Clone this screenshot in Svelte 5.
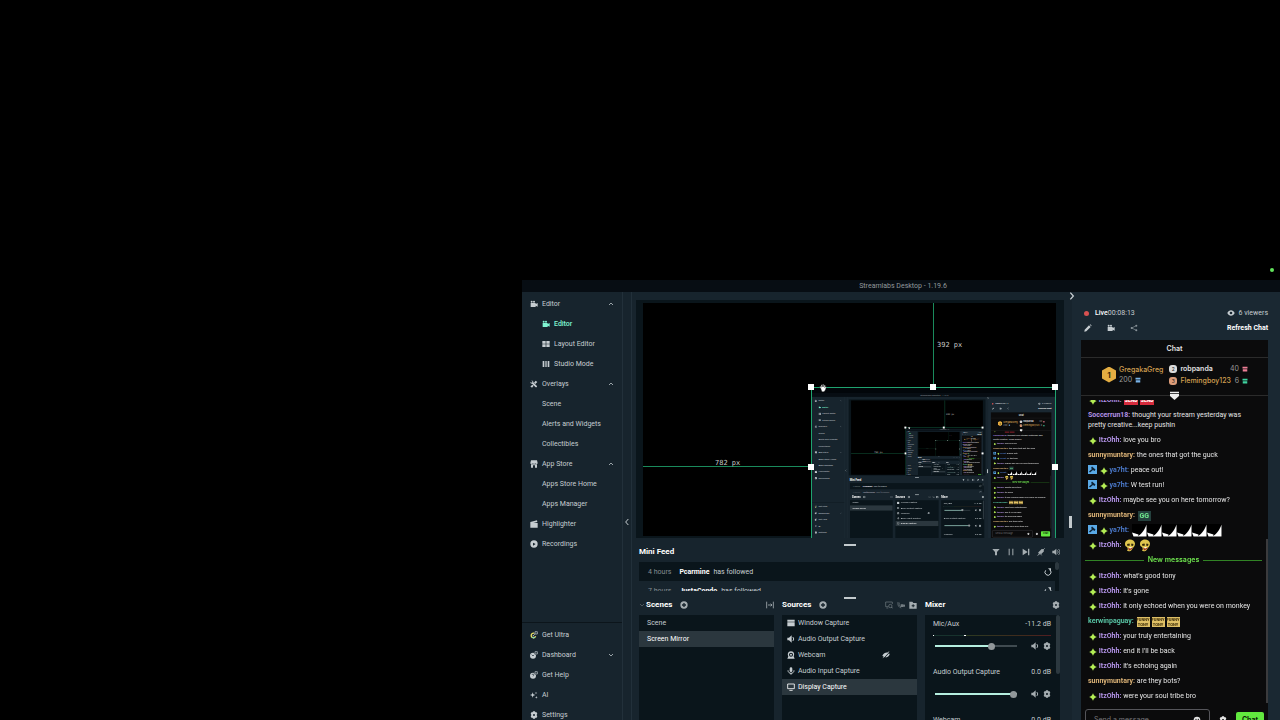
<script>
	const MAX_DEPTH = 2;

	const menu = [
		{ label: 'Editor', icon: 'camera', open: true },
		{ label: 'Editor', icon: 'camera', sub: true, active: true },
		{ label: 'Layout Editor', icon: 'grid', sub: true },
		{ label: 'Studio Mode', icon: 'columns', sub: true },
		{ label: 'Overlays', icon: 'tools', open: true },
		{ label: 'Scene', sub: true },
		{ label: 'Alerts and Widgets', sub: true },
		{ label: 'Collectibles', sub: true },
		{ label: 'App Store', icon: 'store', open: true },
		{ label: 'Apps Store Home', sub: true },
		{ label: 'Apps Manager', sub: true },
		{ label: 'Highlighter', icon: 'clapper' },
		{ label: 'Recordings', icon: 'record' }
	];

	const footerMenu = [
		{ label: 'Get Ultra', icon: 'ultra' },
		{ label: 'Dashboard', icon: 'dashboard', closed: true },
		{ label: 'Get Help', icon: 'help' },
		{ label: 'AI', icon: 'sparkle' },
		{ label: 'Settings', icon: 'gear' }
	];

	const feed = [
		{ age: '4 hours', who: 'Pcarmine', what: 'has followed' },
		{ age: '7 hours', who: 'JustaCondo', what: 'has followed' }
	];

	const sources = [
		{ label: 'Window Capture', icon: 'window' },
		{ label: 'Audio Output Capture', icon: 'speaker' },
		{ label: 'Webcam', icon: 'webcam', hidden: true },
		{ label: 'Audio Input Capture', icon: 'mic' },
		{ label: 'Display Capture', icon: 'display', selected: true }
	];

	let channels = $state([
		{ label: 'Mic/Aux', db: '-11.2 dB', value: 71, metering: true },
		{ label: 'Audio Output Capture', db: '0.0 dB', value: 100 },
		{ label: 'Webcam', db: '0.0 dB', value: 100 }
	]);

	const messages = [
		{ user: 'ItzOhh', star: true, emote: 'send', count: 2 },
		{ user: 'Soccerrun18', text: 'thought your stream yesterday was pretty creative...keep pushin' },
		{ user: 'ItzOhh', star: true, text: 'love you bro' },
		{ user: 'sunnymuntary', text: 'the ones that got the guck' },
		{ user: 'ya7ht', star: true, mod: true, text: 'peace out!' },
		{ user: 'ya7ht', star: true, mod: true, text: 'W test run!' },
		{ user: 'ItzOhh', star: true, text: 'maybe see you on here tomorrow?' },
		{ user: 'sunnymuntary', emote: 'gg', count: 1 },
		{ user: 'ya7ht', star: true, mod: true, emote: 'sail', count: 6 },
		{ user: 'ItzOhh', star: true, emote: 'face', count: 2 },
		{ divider: 'New messages' },
		{ user: 'ItzOhh', star: true, text: "what's good tony" },
		{ user: 'ItzOhh', star: true, text: "it's gone" },
		{ user: 'ItzOhh', star: true, text: 'it only echoed when you were on monkey' },
		{ user: 'kerwinpaguay', emote: 'tony', count: 3 },
		{ user: 'ItzOhh', star: true, text: 'your truly entertaining' },
		{ user: 'ItzOhh', star: true, text: "end it I'll be back" },
		{ user: 'ItzOhh', star: true, text: "it's echoing again" },
		{ user: 'sunnymuntary', text: 'are they bots?' },
		{ user: 'ItzOhh', star: true, text: 'were your soul tribe bro' }
	];
</script>

{#snippet icon(name)}
	<svg class="icon" viewBox="0 0 24 24" fill="currentColor" aria-hidden="true">
		{#if name === 'camera'}
			<path d="M2 9h15v3l6-3v11l-6-3v4H2z" /><circle cx="5" cy="5" r="3" /><circle cx="12" cy="5" r="3" />
		{:else if name === 'grid'}
			<path d="M1 3h10v8H1zM13 3h10v8H13zM1 13h10v8H1zM13 13h10v8H13z" />
		{:else if name === 'columns'}
			<path d="M2 3h5v18H2zM10 3h4v18h-4zM17 3h5v18h-5z" />
		{:else if name === 'tools'}
			<path d="M4 1l5 2 2 5 9 9c3 3-1 6-4 4l-9-9-5-2-1-5 4 3 3-2z" /><path d="M17 2l5 4-6 6-4-4zM8 14l3 3-5 6-5-4z" />
		{:else if name === 'store'}
			<path d="M3 1h18l2 8c0 4-5 4-6 1-1 3-5 3-5 0-1 3-5 3-5 0-1 3-6 3-6-1zM3 13h18v10h-6v-7H9v7H3z" />
		{:else if name === 'clapper'}
			<path d="M1 6l20-5 1 5-12 3h13v14H1z" />
		{:else if name === 'record'}
			<path fill-rule="evenodd" d="M12 1a11 11 0 1 0 0 22a11 11 0 1 0 0-22zm-3 7l8 4-8 5z" />
		{:else if name === 'ultra' || name === 'dashboard' || name === 'help'}
			{#if name === 'ultra'}
				<path d="M15 8a7 7 0 1 0 2 8" fill="none" stroke="#e8e067" stroke-width="4" />
				<path d="M6 19a7 7 0 0 0 9 0" fill="none" stroke="#7fe0c0" stroke-width="3" />
				<circle cx="10" cy="14" r="2" />
			{:else}
				<circle cx="9" cy="14" r="9" />
				<path d={name === 'help' ? 'M6 12c0-4 6-4 6 0 0 2-3 2-3 4' : 'M5 11l4 4 3-3'} fill="none" stroke="#17242d" stroke-width="2" />
			{/if}
			<path d="M13 1h10v10H13z" fill="#17242d" /><path d="M15 2h7v7h-7zM15 9l-3 3" fill="none" stroke="currentColor" stroke-width="2" />
		{:else if name === 'sparkle'}
			<path d="M8 4l2 6 6 2-6 2-2 6-2-6-6-2 6-2zM18 2l1 3 3 1-3 1-1 3-1-3-3-1 3-1zM19 15l1 3 3 1-3 1-1 3-1-3-3-1 3-1z" />
		{:else if name === 'gear'}
			<path fill-rule="evenodd" d="M9 1h6l1 3 3-1 3 5-2 3v2l2 3-3 5-3-1-1 3H9l-1-3-3 1-3-5 2-3v-2L2 8l3-5 3 1zm3 8a3 3 0 1 0 0 6a3 3 0 1 0 0-6z" />
		{:else if name === 'plus'}
			<path fill-rule="evenodd" d="M12 1a11 11 0 1 0 0 22a11 11 0 1 0 0-22zm-2 5h4v4h4v4h-4v4h-4v-4H6v-4h4z" />
		{:else if name === 'collapse'}
			<path d="M2 2v20M22 2v20M6 12h12M14 8l4 4-4 4" fill="none" stroke="currentColor" stroke-width="2.5" />
		{:else if name === 'filter'}
			<path d="M1 3h22l-8 9v10h-6V12z" />
		{:else if name === 'pause'}
			<path d="M5 2h3v20H5zM16 2h3v20h-3z" />
		{:else if name === 'skip'}
			<path d="M2 2l15 10L2 22zM18 2h4v20h-4z" />
		{:else if name === 'mute'}
			<path d="M3 14L14 3l5 1 2 6-8 8z" /><path d="M2 23L23 1M4 18l6-1 4 5" fill="none" stroke="currentColor" stroke-width="2.5" />
		{:else if name === 'speaker'}
			<path d="M1 8h5l8-7v22l-8-7H1z" /><path d="M17 6c4 3 4 9 0 12" fill="none" stroke="currentColor" stroke-width="3" />
		{:else if name === 'volume'}
			<path d="M1 8h5l7-6v20l-7-6H1z" /><path d="M16 7c3 3 3 7 0 10M19 3c6 5 6 13 0 18" fill="none" stroke="currentColor" stroke-width="2.5" />
		{:else if name === 'undo'}
			<path d="M5 7a9 9 0 1 0 13-1" fill="none" stroke="currentColor" stroke-width="3" /><path d="M12 1h9v9z" />
		{:else if name === 'window'}
			<path d="M1 2h22v6H1zM1 10h22v12H1z" />
		{:else if name === 'webcam'}
			<path fill-rule="evenodd" d="M12 1C2 1 1 11 4 16l-3 7h22l-3-7C23 11 22 1 12 1zm0 4a6 6 0 1 1 0 12a6 6 0 1 1 0-12z" /><circle cx="12" cy="11" r="3" />
		{:else if name === 'mic'}
			<rect x="8" y="1" width="8" height="14" rx="4" /><path d="M3 10c0 12 18 12 18 0M12 18v5" fill="none" stroke="currentColor" stroke-width="3" />
		{:else if name === 'display'}
			<path d="M2 3h20v14H2zM7 22h10" fill="none" stroke="currentColor" stroke-width="2.5" />
		{:else if name === 'hidden'}
			<path d="M1 14c4-9 12-11 18-9L7 19z" /><path d="M23 10c-2 7-8 10-13 9L21 7zM3 22L22 2l-1-1L2 21z" />
		{:else if name === 'monitor'}
			<path d="M10 17H2V3h20v6M4 21h6" fill="none" stroke="currentColor" stroke-width="2" /><circle cx="16" cy="15" r="5" fill="none" stroke="currentColor" stroke-width="2" /><path d="M19 18l4 4" stroke="currentColor" stroke-width="3" />
		{:else if name === 'aim'}
			<path d="M3 3c-2 10 2 16 10 18M7 5c-2 7 0 10 5 12" fill="none" stroke="currentColor" stroke-width="2" /><path d="M11 10h9v8h-9zM20 13l4-3v8l-4-2z" />
		{:else if name === 'folder'}
			<path fill-rule="evenodd" d="M1 2h9l3 4h10v17H1zm10 8v3H8v3h3v3h3v-3h3v-3h-3v-3z" />
		{:else if name === 'eye'}
			<path fill-rule="evenodd" d="M1 12C6 1 18 1 23 12C18 23 6 23 1 12zm11-4a4 4 0 1 0 0 8a4 4 0 1 0 0-8z" />
		{:else if name === 'pencil'}
			<path d="M1 23l1-6L15 4l5 5L7 22zM17 2l2-1 4 4-1 2z" />
		{:else if name === 'share'}
			<path d="M19 5L5 12l14 7" fill="none" stroke="currentColor" stroke-width="2" /><circle cx="19" cy="5" r="3" /><circle cx="5" cy="12" r="3" /><circle cx="19" cy="19" r="3" />
		{:else if name === 'gift'}
			<path d="M2 3h20v7H2zM3 13h18v9H3z" />
		{:else if name === 'face'}
			<circle cx="12" cy="12" r="10" /><circle cx="9" cy="10" r="2" fill="#0b0b0b" /><circle cx="16" cy="10" r="2" fill="#0b0b0b" />
		{:else if name === 'star'}
			<path d="M12 0c1 7 5 11 12 12-7 1-11 5-12 12-1-7-5-11-12-12 7-1 11-5 12-12z" /><path d="M12 4l8 8-8 8-8-8z" />
		{:else if name === 'up'}
			<path d="M4 16l8-8 8 8" fill="none" stroke="currentColor" stroke-width="3" />
		{:else if name === 'down'}
			<path d="M4 8l8 8 8-8" fill="none" stroke="currentColor" stroke-width="3" />
		{:else if name === 'left'}
			<path d="M16 3l-8 9 8 9" fill="none" stroke="currentColor" stroke-width="3" />
		{:else if name === 'right'}
			<path d="M7 2l9 10-9 10" fill="none" stroke="currentColor" stroke-width="4" />
		{/if}
	</svg>
{/snippet}

{#snippet emote(name)}
	{#if name === 'send'}
		<span class="send">SEND</span>
	{:else if name === 'gg'}
		<span class="gg">GG</span>
	{:else if name === 'tony'}
		<span class="tony"><span>FUNNY</span><span>TONY</span></span>
	{:else if name === 'sail'}
		<svg class="sail" viewBox="0 0 30 26" aria-hidden="true">
			<path d="M0 0h30v26H0z" fill="#000" />
			<path d="M29 1v24H11C21 19 26 10 29 1zM0 17l13 4-1 4H3z" fill="#fff" />
		</svg>
	{:else}
		<svg class="skull" viewBox="0 0 24 26" aria-hidden="true">
			<path d="M2 10C2-2 21-2 22 9c0 5-3 7-5 10-2 6-9 7-11 4 3-3 1-5 0-7C3 15 2 13 2 10z" fill="#dfc64e" />
			<path d="M6 10l5-1 1 4-5 1zM15 9l4 1-1 4-4-1z" fill="#32280c" />
			<path d="M8 17c3 3 6 2 9-1l-1 4-6 3z" fill="#9b2c22" />
			<path d="M9 17l7-1-2 3z" fill="#fff" />
		</svg>
	{/if}
{/snippet}

{#snippet menuItem(item)}
	<a href="#menu" class="item" class:sub={item.sub} class:active={item.active}>
		{#if item.icon}{@render icon(item.icon)}{/if}
		<span class="label">{item.label}</span>
		{#if item.open}{@render icon('up')}{/if}
		{#if item.closed}{@render icon('down')}{/if}
	</a>
{/snippet}

{#snippet streamlabs(depth)}
	<div class="window">
		<header class="titlebar">Streamlabs Desktop - 1.19.6</header>
		<div class="body">
			<nav class="sidebar">
				{#each menu as item}{@render menuItem(item)}{/each}
				<div class="footer">
					{#each footerMenu as item}{@render menuItem(item)}{/each}
				</div>
			</nav>
			<button class="strip" aria-label="Collapse menu">{@render icon('left')}</button>

			<div class="studio">
				<div class="display">
					<div class="canvas">
						<div class="guide-x"></div>
						<div class="guide-y"></div>
						<span class="distance dist-x">782 px</span>
						<span class="distance dist-y">392 px</span>
						<div class="selection">
							{#if depth < MAX_DEPTH}
								<div class="mirror" inert aria-hidden="true">
									<div class="scaled">{@render streamlabs(depth + 1)}</div>
								</div>
							{/if}
							<i class="handle nw"></i>
							<i class="handle n"></i>
							<i class="handle ne"></i>
							<i class="handle w"></i>
							<i class="handle e"></i>
							<svg class="hand" viewBox="0 0 24 24" aria-hidden="true">
								<path
									d="M5 13L2 8l3-1 2 3-1-7 3-1 2 7V1h3v8l2-6 3 1-2 7 3-4 2 2-3 9-4 5H9z"
									fill="#fff"
									stroke="#222"
								/>
							</svg>
						</div>
					</div>
				</div>

				<div class="splitter"></div>
				<header class="bar">
					<h2>Mini Feed</h2>
					<span class="spacer"></span>
					<div class="tools wide">
						<button aria-label="Filter">{@render icon('filter')}</button>
						<button aria-label="Pause queue">{@render icon('pause')}</button>
						<button aria-label="Skip alert">{@render icon('skip')}</button>
						<button aria-label="Mute alerts">{@render icon('mute')}</button>
						<button aria-label="Volume">{@render icon('volume')}</button>
					</div>
				</header>
				<div class="feed">
					<div class="events">
						{#each feed as event}
							<div class="event">
								<span class="age">{event.age}</span>
								<strong>{event.who}</strong>
								<span>{event.what}</span>
								<span class="spacer"></span>
								<button aria-label="Replay alert">{@render icon('undo')}</button>
							</div>
						{/each}
					</div>
					<div class="scroll"><i></i></div>
				</div>

				<div class="splitter"></div>
				<div class="panels">
					<section>
						<header class="bar">
							<button class="caret" aria-label="Scene collections">{@render icon('down')}</button>
							<h2>Scenes</h2>
							<button class="add" aria-label="Add scene">{@render icon('plus')}</button>
							<span class="spacer"></span>
							<button aria-label="Transitions">{@render icon('collapse')}</button>
						</header>
						<div class="list">
							<button class="row">Scene</button>
							<button class="row selected">Screen Mirror</button>
						</div>
					</section>
					<section>
						<header class="bar">
							<h2>Sources</h2>
							<button class="add" aria-label="Add source">{@render icon('plus')}</button>
							<span class="spacer"></span>
							<div class="tools">
								<button class="dim" aria-label="Guest cam">{@render icon('monitor')}</button>
								<button class="dim" aria-label="Selective recording">{@render icon('aim')}</button>
								<button aria-label="Add folder">{@render icon('folder')}</button>
							</div>
						</header>
						<div class="list">
							{#each sources as source}
								<button class="row source" class:selected={source.selected}>
									{@render icon(source.icon)}
									<span class="label">{source.label}</span>
									{#if source.hidden}<span class="off">{@render icon('hidden')}</span>{/if}
								</button>
							{/each}
						</div>
					</section>
					<section>
						<header class="bar">
							<h2>Mixer</h2>
							<span class="spacer"></span>
							<button aria-label="Audio settings">{@render icon('gear')}</button>
						</header>
						<div class="list mixer">
							<div class="channels">
								{#each channels as channel}
									<div class="channel">
										<div class="names"><span>{channel.label}</span><span>{channel.db}</span></div>
										<div class="meter" class:metering={channel.metering}></div>
										<div class="controls">
											<input
												type="range"
												aria-label={channel.label}
												bind:value={channel.value}
												style="--value: {channel.value}%"
											/>
											<button aria-label="Mute">{@render icon('speaker')}</button>
											<button aria-label="Channel settings">{@render icon('gear')}</button>
										</div>
									</div>
								{/each}
							</div>
							<div class="scroll tall"><i></i></div>
						</div>
					</section>
				</div>
			</div>

			<aside class="live">
				<button class="close" aria-label="Hide chat">{@render icon('right')}</button>
				<div class="status">
					<i class="dot"></i>
					<span class="on">Live</span><span>00:08:13</span>
					<span class="spacer"></span>
					{@render icon('eye')}
					<span class="viewers">6 viewers</span>
				</div>
				<div class="actions">
					<button aria-label="Edit stream info">{@render icon('pencil')}</button>
					<button aria-label="Stream dashboard">{@render icon('camera')}</button>
					<button class="dim" aria-label="Share">{@render icon('share')}</button>
					<span class="spacer"></span>
					<button class="refresh">Refresh Chat</button>
				</div>

				<div class="chat">
					<header class="chat-title">Chat</header>
					<div class="leaders">
						<span class="medal">1</span>
						<div class="top">
							<b class="gold">GregakaGreg</b>
							<span class="count">200 <span class="gift blue">{@render icon('gift')}</span></span>
						</div>
						<div class="others">
							<div class="rank">
								<span class="pin silver">2</span>
								<b>robpanda</b>
								<span class="count">40</span>
								<span class="gift pink">{@render icon('gift')}</span>
							</div>
							<div class="rank">
								<span class="pin bronze">3</span>
								<b class="gold">Flemingboy123</b>
								<span class="count">6</span>
								<span class="gift mint">{@render icon('gift')}</span>
							</div>
						</div>
						<svg class="pull" viewBox="0 0 24 24" aria-hidden="true">
							<path d="M0 2h24v4H0zM0 8h24v5L12 24 0 13z" fill="#eee" />
						</svg>
					</div>
					<div class="messages">
						{#each messages as message}
							{#if message.divider}
								<div class="divider">{message.divider}</div>
							{:else}
								<p class="message">
									{#if message.mod}
										<svg class="mod" viewBox="0 0 18 18" aria-hidden="true">
											<path d="M0 0h18v18H0z" fill="#5aa9e6" />
											<path d="M8 3l7 6-2 3-3-2-6 5-2-2 6-5-2-2z" fill="#0c2236" />
										</svg>
									{/if}
									{#if message.star}<span class="star">{@render icon('star')}</span>{/if}
									<b class="user {message.user}">{message.user}:</b>
									{#if message.text}{message.text}{/if}
									{#if message.emote}
										<span class="emotes">
											{#each { length: message.count } as _}{@render emote(message.emote)}{/each}
										</span>
									{/if}
								</p>
							{/if}
						{/each}
						<i class="chat-thumb"></i>
					</div>
					<form class="composer" onsubmit={(e) => e.preventDefault()}>
						<label class="field">
							<input type="text" placeholder="Send a message..." aria-label="Send a message" />
							{@render icon('face')}
						</label>
						<button type="button" aria-label="Chat settings">{@render icon('gear')}</button>
						<button class="submit">Chat</button>
					</form>
				</div>
			</aside>
		</div>
	</div>
{/snippet}

<main class="desktop">
	<i class="camera-light"></i>
	<div class="placed">{@render streamlabs(0)}</div>
</main>

<style>
	:global(body) {
		background: #000;
	}

	.desktop {
		position: relative;
		height: 100vh;
		overflow: hidden;
		background: #000;
		font-family: Roboto, sans-serif;
		font-size: 7px;
		line-height: 10px;
		color: #c6cdd1;
	}

	.desktop :global(*) {
		box-sizing: border-box;
	}

	/* window runs a little past the bottom of the screen */
	.placed {
		position: absolute;
		inset: 280px 0 -16px 522px;
	}

	.camera-light {
		position: absolute;
		top: 268px;
		right: 6px;
		width: 4px;
		height: 4px;
		border-radius: 50%;
		background: #62e35c;
	}

	button {
		display: flex;
		align-items: center;
		padding: 0;
		border: 0;
		background: none;
		font: inherit;
		color: inherit;
	}

	a {
		color: inherit;
		text-decoration: none;
	}

	h2 {
		margin: 0;
		font-size: 8px;
		font-weight: 700;
		color: #fff;
	}

	.icon {
		display: block;
		flex: none;
		width: 8px;
		height: 8px;
	}

	.spacer {
		flex: 1;
	}

	.window {
		display: flex;
		flex-direction: column;
		height: 100%;
		background: #17242d;
	}

	.titlebar {
		height: 12px;
		padding-left: 4px;
		line-height: 12px;
		text-align: center;
		background: #070d13;
		color: #92989c;
	}

	.body {
		flex: 1;
		min-height: 0;
		display: grid;
		grid-template-columns: 101px 9px minmax(0, 1fr) 208px;
	}

	.sidebar {
		display: flex;
		flex-direction: column;
		padding: 2px 0 11px;
		border-right: 1px solid #22303a;
	}

	.item {
		display: flex;
		align-items: center;
		gap: 4px;
		height: 20px;
		padding: 0 8px 0 8px;
	}

	.item .label {
		flex: 1;
		white-space: nowrap;
	}

	.item.sub {
		padding-left: 20px;
	}

	.item.active {
		color: #80f5d2;
		font-weight: 500;
	}

	.item .label + :global(.icon) {
		width: 6px;
		height: 6px;
	}

	.footer {
		margin-top: auto;
		padding-top: 2px;
		border-top: 1px solid #0c151b;
	}

	.strip {
		justify-content: center;
		border-right: 1px solid #22303a;
		padding-top: 16px;
	}

	.studio {
		display: flex;
		flex-direction: column;
		min-height: 0;
		padding: 8px 12px 0 7px;
	}

	.display {
		flex: 1;
		min-height: 0;
		display: flex;
		margin: 0 -4px 0 -3px;
		padding: 3px 8px 2px 7px;
		overflow: hidden;
		background: #0a151b;
	}

	.canvas {
		position: relative;
		flex: 1;
		background: #000;
	}

	.guide-x,
	.guide-y {
		position: absolute;
		background: #1a8a5c;
	}

	.guide-x {
		top: 163px;
		left: 0;
		width: 168px;
		height: 1px;
	}

	.guide-y {
		top: 0;
		left: 290px;
		width: 1px;
		height: 84px;
	}

	.distance {
		position: absolute;
		font-family: 'DejaVu Sans Mono', monospace;
		line-height: 8px;
		color: #c9c9c9;
	}

	.dist-x {
		top: 156px;
		left: 72px;
	}

	.dist-y {
		top: 38px;
		left: 294px;
	}

	.selection {
		position: absolute;
		top: 84px;
		left: 168px;
		right: 0;
		height: 160px;
		border: 1px solid #1fa36f;
	}

	.mirror {
		height: 100%;
		padding-top: 5px;
		overflow: hidden;
		background: #02060a;
	}

	.scaled {
		width: 310%;
		height: 296%;
		transform: scale(0.323);
		transform-origin: top left;
	}

	.handle {
		position: absolute;
		width: 6px;
		height: 6px;
		background: #fff;
	}

	.nw,
	.n,
	.ne {
		top: -4px;
	}

	.w,
	.e {
		top: 76px;
	}

	.nw,
	.w {
		left: -4px;
	}

	.n {
		left: calc(50% - 4px);
	}

	.ne,
	.e {
		right: -3px;
	}

	.hand {
		position: absolute;
		top: -4px;
		left: 7px;
		width: 8px;
		height: 8px;
	}

	.splitter {
		flex: none;
		display: flex;
		justify-content: center;
		align-items: flex-end;
		height: 8px;
	}

	.splitter::before {
		content: '';
		width: 12px;
		height: 2px;
		background: #c3cacd;
	}

	.bar {
		flex: none;
		display: flex;
		align-items: center;
		height: 12px;
		margin-bottom: 4px;
		color: #a5adb1;
	}

	.tools {
		display: flex;
		gap: 4px;
	}

	.tools.wide {
		gap: 7px;
	}

	.dim {
		opacity: 0.65;
	}

	.caret {
		width: 7px;
		opacity: 0.5;
	}

	.caret :global(.icon) {
		width: 6px;
		height: 6px;
	}

	.add {
		margin-left: 8px;
	}

	.feed {
		flex: none;
		display: flex;
		height: 29px;
		margin-right: 1px;
		overflow: hidden;
	}

	.events {
		flex: 1;
	}

	.event {
		display: flex;
		align-items: center;
		gap: 4px;
		height: 19px;
		padding: 0 3px 0 9px;
	}

	.event:first-child {
		background: #0a151b;
	}

	.event strong {
		color: #fff;
	}

	.event .age {
		margin-right: 4px;
		color: #848d92;
	}

	.scroll {
		flex: none;
		width: 4px;
		background: #0a151b;
	}

	.scroll i {
		display: block;
		height: 8px;
		border-radius: 2px;
		background: #2c383f;
	}

	.scroll.tall i {
		height: 59px;
	}

	.panels {
		flex: none;
		display: grid;
		grid-template-columns: repeat(3, minmax(0, 1fr));
		gap: 8px;
		height: 137px;
	}

	section {
		display: flex;
		flex-direction: column;
		min-width: 0;
	}

	.list {
		flex: 1;
		min-height: 0;
		overflow: hidden;
		background: #0a151b;
	}

	.row {
		width: 100%;
		height: 16px;
		padding: 0 8px;
	}

	.row.source {
		gap: 3px;
		padding-left: 5px;
	}

	.row.selected {
		background: #2b373e;
		color: #fff;
	}

	.off {
		margin-left: auto;
		margin-right: 19px;
	}

	.mixer {
		display: flex;
	}

	.channels {
		flex: 1;
		min-width: 0;
		padding: 3px 5px 0 8px;
	}

	.channel {
		height: 48px;
	}

	.names {
		display: flex;
		justify-content: space-between;
		height: 12px;
		line-height: 12px;
	}

	.meter {
		height: 1px;
		margin: 5px 0 6px;
	}

	.meter.metering {
		background: linear-gradient(
			90deg,
			#fff 1px,
			#17322d 1px,
			#17322d 31px,
			#fff 31px,
			#fff 33px,
			#2c3a22 33px,
			#43291c 80%,
			#541d22 100%
		);
	}

	.controls {
		display: flex;
		align-items: center;
		gap: 4px;
		color: #a5adb1;
	}

	.controls input {
		flex: 1;
		width: 0;
		min-width: 0;
		height: 8px;
		margin: 0 10px 0 2px;
		appearance: none;
		background: linear-gradient(90deg, #b5eedf var(--value), #3f4a50 var(--value)) center / 100% 2px no-repeat;
	}

	.controls input::-webkit-slider-thumb {
		appearance: none;
		width: 7px;
		height: 7px;
		border-radius: 50%;
		background: #91979a;
	}

	.live {
		position: relative;
		display: flex;
		flex-direction: column;
		min-height: 0;
		padding: 14px 12px 0 9px;
		background: #1a2832;
	}

	/* grip on the panel's left edge */
	.live::before {
		content: '';
		position: absolute;
		top: 224px;
		left: -3px;
		width: 3px;
		height: 12px;
		background: #c3cacd;
	}

	.close {
		position: absolute;
		top: 0;
		left: -4px;
	}

	.status {
		display: flex;
		align-items: center;
		height: 14px;
	}

	.dot {
		width: 5px;
		height: 5px;
		margin: 0 6px 0 3px;
		border-radius: 50%;
		background: #d75151;
	}

	.on {
		font-weight: 500;
		color: #fff;
	}

	.viewers {
		margin-left: 4px;
	}

	.actions {
		display: flex;
		align-items: center;
		gap: 15px;
		height: 15px;
		padding-left: 3px;
		margin-bottom: 5px;
	}

	.refresh {
		font-weight: 700;
		color: #fff;
	}

	.chat {
		flex: 1;
		min-height: 0;
		display: flex;
		flex-direction: column;
		background: #0b0b0c;
		font-family: Inter, sans-serif;
		color: #e4e4e4;
	}

	.chat-title {
		height: 18px;
		line-height: 18px;
		text-align: center;
		font-weight: 600;
		border-bottom: 1px solid #2b2b2b;
	}

	.leaders {
		position: relative;
		flex: none;
		display: flex;
		align-items: center;
		gap: 3px;
		height: 38px;
		margin-bottom: 4px;
		padding: 0 20px 4px 21px;
		border-bottom: 1px solid #2b2b2b;
	}

	.medal {
		flex: none;
		width: 14px;
		height: 16px;
		line-height: 16px;
		text-align: center;
		font-size: 8px;
		font-weight: 700;
		color: #3c2908;
		background: #e4ad42;
		clip-path: polygon(50% 0, 100% 25%, 100% 75%, 50% 100%, 0 75%, 0 25%);
	}

	.leaders b {
		font-weight: 600;
	}

	.leaders .gold {
		font-weight: 500;
		color: #d3a052;
	}

	.count {
		color: #999;
	}

	.top {
		display: flex;
		flex-direction: column;
	}

	.top .count {
		display: flex;
		align-items: center;
		gap: 3px;
	}

	.gift :global(.icon) {
		width: 6px;
		height: 6px;
	}

	.blue {
		color: #79b3e8;
	}

	.pink {
		color: #ee7f96;
	}

	.mint {
		color: #3fd3a0;
	}

	.others {
		flex: 1;
		display: flex;
		flex-direction: column;
		gap: 2px;
		padding-left: 3px;
	}

	.rank {
		display: flex;
		align-items: center;
		gap: 3px;
	}

	.rank b {
		flex: 1;
	}

	.pin {
		width: 8px;
		height: 8px;
		line-height: 8px;
		text-align: center;
		font-size: 5px;
		border-radius: 3px;
		color: #222;
	}

	.silver {
		background: #dcdcdc;
	}

	.bronze {
		background: #dc9c79;
	}

	.pull {
		position: absolute;
		z-index: 1;
		bottom: -5px;
		left: calc(50% - 5px);
		width: 9px;
		height: 9px;
	}

	.messages {
		position: relative;
		flex: 1;
		min-height: 0;
		display: flex;
		flex-direction: column;
		justify-content: flex-end;
		padding: 0 8px 0 7px;
		overflow: hidden;
		font-family: Roboto, sans-serif;
	}

	.message {
		flex: none;
		margin: 0;
		padding: 3px 0 2px;
	}

	.user {
		font-weight: 700;
		color: #b292e6;
	}

	.user.sunnymuntary {
		color: #dcb377;
	}

	.user.ya7ht {
		color: #4a78c8;
	}

	.user.kerwinpaguay {
		color: #58c4a4;
	}

	.star {
		display: inline-block;
		margin: -1px 0 -1px 1px;
		vertical-align: -2px;
		color: #b3ec55;
	}

	.mod {
		width: 9px;
		height: 9px;
		margin: 0 0 -2px;
	}

	.emotes {
		display: inline-flex;
		align-items: center;
		gap: 2px;
		height: 13px;
		margin: -2px 0 -3px 1px;
		vertical-align: middle;
	}

	.send {
		width: 14px;
		line-height: 9px;
		text-align: center;
		font-size: 5px;
		font-weight: 800;
		color: #fff;
		background: #d62b3c;
	}

	.gg {
		width: 13px;
		line-height: 10px;
		text-align: center;
		font-weight: 800;
		color: #6ce08a;
		background: #25413e;
	}

	.tony {
		display: flex;
		flex-direction: column;
		width: 13px;
		line-height: 5px;
		text-align: center;
		font-size: 4px;
		font-weight: 800;
		color: #41310b;
		background: #dfc066;
	}

	.sail {
		width: 15px;
		height: 13px;
		margin-right: -2px;
	}

	.skull {
		width: 12px;
		height: 13px;
		margin-right: 1px;
	}

	.divider {
		flex: none;
		display: flex;
		align-items: center;
		gap: 4px;
		height: 16px;
		margin: 0 -2px 0 -3px;
		font-family: Inter, sans-serif;
		font-weight: 600;
		color: #6de04e;
	}

	.divider::before,
	.divider::after {
		content: '';
		flex: 1;
		height: 1px;
		background: #318325;
	}

	.chat-thumb {
		position: absolute;
		right: 0;
		bottom: 0;
		width: 2px;
		height: 164px;
		background: #3b3b3d;
	}

	.composer {
		flex: none;
		display: flex;
		align-items: center;
		gap: 9px;
		height: 33px;
		padding: 0 4px;
	}

	.field {
		flex: 1;
		min-width: 0;
		display: flex;
		align-items: center;
		height: 22px;
		padding: 0 8px;
		border: 1px solid #55555a;
		border-radius: 3px;
	}

	.field input {
		flex: 1;
		min-width: 0;
		padding: 0;
		border: 0;
		background: none;
		font: inherit;
		color: inherit;
	}

	.field input::placeholder {
		color: #77777b;
	}

	.submit {
		flex: none;
		justify-content: center;
		width: 28px;
		height: 16px;
		border-radius: 2px;
		font-weight: 700;
		color: #0b1a08;
		background: #62e83f;
	}
</style>
